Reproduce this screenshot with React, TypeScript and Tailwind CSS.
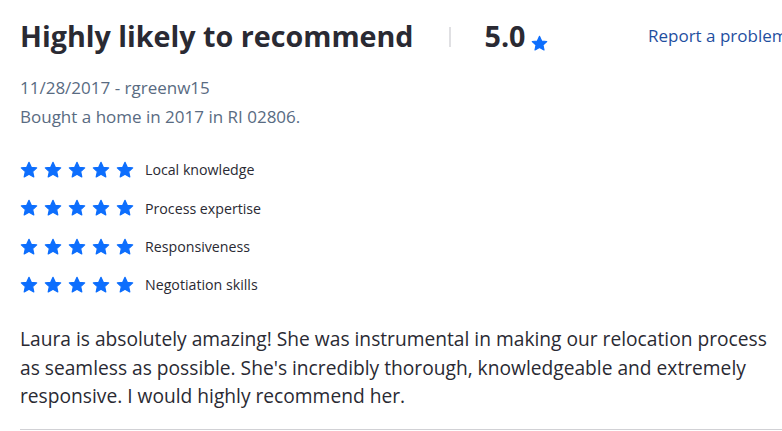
import React from "react";

const Star = ({ size = 18 }: { size?: number }) => (
  <svg width={size} height={size} viewBox="0 0 24 24" aria-hidden="true">
    <path
      fill="#0d6efd"
      stroke="#0d6efd"
      strokeWidth="1.6"
      strokeLinejoin="round"
      d="M12 1.8l3.05 6.6 7.2.8-5.35 4.9 1.5 7.1L12 17.6l-6.4 3.6 1.5-7.1L1.75 9.2l7.2-.8z"
    />
  </svg>
);

const rows = ["Local knowledge", "Process expertise", "Responsiveness", "Negotiation skills"];

export default function App() {
  return (
    <div
      className="w-[782px] h-[431px] overflow-hidden bg-white pl-5"
      style={{ fontFamily: '"Open Sans", sans-serif' }}
    >
      <div className="flex items-center pt-[16px] h-[56px] whitespace-nowrap">
        <div className="flex items-center w-[628px] shrink-0">
          <h1 className="text-[28.7px] font-bold text-[#2a2a33] leading-none">
            Highly likely to recommend
          </h1>
          <div className="w-[2px] h-[20px] bg-[#e0e0e3] ml-[35px] mt-[3px]" />
          <div className="flex items-end ml-[34px]">
            <span className="text-[28.7px] font-bold text-[#2a2a33] leading-none">5.0</span>
            <span className="ml-[5px] mb-[-2px]">
              <Star size={17} />
            </span>
          </div>
        </div>
        <a className="text-[17px] text-[#1f4f9f] leading-none mt-[-2px] whitespace-nowrap shrink-0">
          Report a problem
        </a>
      </div>
      <div className="mt-[17px] text-[17px] leading-[29px] text-[#596b82]">
        <div>11/28/2017 - rgreenw15</div>
        <div>Bought a home in 2017 in RI 02806.</div>
      </div>
      <div className="mt-[30px] flex flex-col gap-[20.3px]">
        {rows.map((r) => (
          <div key={r} className="flex items-center h-[18px]">
            <div className="flex gap-[6px]">
              {[0, 1, 2, 3, 4].map((i) => (
                <Star key={i} size={18} />
              ))}
            </div>
            <span className="ml-[11px] text-[14.2px] text-[#2a2a33]">{r}</span>
          </div>
        ))}
      </div>
      <p className="mt-[31px] pr-[8px] text-[19.2px] leading-[28.7px] text-[#2a2a33]">
        Laura is absolutely amazing! She was instrumental in making our relocation process as seamless as possible. She's incredibly thorough, knowledgeable and extremely responsive. I would highly recommend her.
      </p>
      <div className="mt-[18px] h-[1px] bg-[#d1d1d5]" />
    </div>
  );
}
